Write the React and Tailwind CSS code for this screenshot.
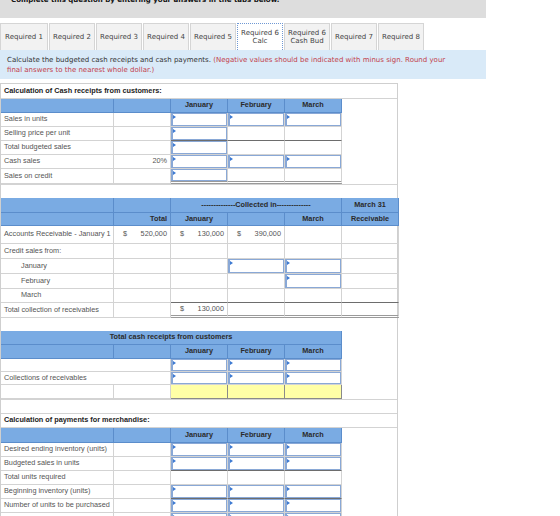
import React from 'react';

const GRID = 'grid grid-cols-[113px_57px_57px_57px_57px_57px]';

const edge = {
  dark: 'border-b-[#6d6d6d]',
  double: 'border-b-[3px] border-double border-b-[#9a9a9a]',
};

const Cell = ({ children, className = '', b }) => (
  <div className={`flex items-center border-r border-b border-[#d3d3d3] ${b ? edge[b] : ''} ${className}`}>
    {children}
  </div>
);

const Label = ({ children, indent, span }) => (
  <Cell className={`${span ? 'col-span-2' : ''} ${indent ? 'pl-[20px]' : 'pl-[3px]'} whitespace-nowrap text-[#555]`}>
    {children}
  </Cell>
);

const Empty = ({ b }) => <Cell b={b} />;

const Blank = () => <div />;

const Input = ({ b }) => (
  <div className={`relative border-r border-b border-[#d3d3d3] ${b ? edge[b] : ''}`}>
    <div className="absolute inset-0 border border-l-2 border-[#89a8d6] bg-white">
      <span className="absolute left-0 top-[1px] block h-0 w-0 border-y-[2px] border-l-[3px] border-y-transparent border-l-[#3d7ad2]" />
    </div>
  </div>
);

const Yellow = () => <div className="border-r border-b border-[#8a8a8a] bg-[#ffffa6]" />;

const Money = ({ v, b }) => (
  <Cell b={b} className="justify-between pl-[9px] pr-[3px] text-[#555]">
    <span>$</span>
    <span>{v}</span>
  </Cell>
);

const H = ({ children, className = '' }) => (
  <div className={`flex items-center justify-center whitespace-nowrap border-r border-b border-[#5b8dcb] bg-[#7aabe3] font-bold text-[#2a2a2a] ${className}`}>
    {children}
  </div>
);

const tabs = [
  { t: ['Required 1'], w: 'w-[48px]' },
  { t: ['Required 2'] },
  { t: ['Required 3'] },
  { t: ['Required 4'] },
  { t: ['Required 5'] },
  { t: ['Required 6', 'Calc'], active: true },
  { t: ['Required 6', 'Cash Bud'] },
  { t: ['Required 7'] },
  { t: ['Required 8'] },
];

const monthHeader = (
  <div className={`${GRID} h-[14px]`}>
    <H />
    <H />
    <H>January</H>
    <H>February</H>
    <H>March</H>
    <Blank />
  </div>
);

export default function App() {
  return (
    <div className="h-[516px] w-[560px] overflow-hidden bg-white">
      <div className="h-[18px] w-[486px] overflow-hidden bg-[#dddddd] pl-[11px] font-['DejaVu_Sans',sans-serif] text-[7px] font-bold leading-[8px] text-[#111]">
        <div className="-mt-[4px] whitespace-nowrap">Complete this question by entering your answers in the tabs below.</div>
      </div>

      <div className="mt-[5px] flex gap-px font-['DejaVu_Sans',sans-serif] text-[7px] leading-[8px] text-[#444]">
        {tabs.map((tab, i) => (
          <div
            key={i}
            className={`flex h-[27px] flex-col items-center justify-center border border-b-0 text-center ${tab.w || 'w-[46px]'} ${
              tab.active ? 'border-dotted border-[#6f98d4] bg-white' : 'border-[#d5d5d5] bg-[#f2f2f2]'
            }`}
          >
            {tab.t.map((line) => (
              <span key={line}>{line}</span>
            ))}
          </div>
        ))}
      </div>

      <div className="h-[29px] w-[486px] whitespace-nowrap bg-[#d9eaf8] px-[7px] pt-[5px] font-['DejaVu_Sans',sans-serif] text-[7px] leading-[10px] text-[#333]">
        Calculate the budgeted cash receipts and cash payments.{' '}
        <span className="text-[#c2414b]">
          (Negative values should be indicated with minus sign. Round your
          <br />
          final answers to the nearest whole dollar.)
        </span>
      </div>

      <div className="mt-[4px] w-[398px] border-t border-l border-r border-[#cfcfcf] font-['Liberation_Sans',Arial,sans-serif] text-[7.3px] text-[#333]">
        {/* cash receipts */}
        <div className="flex h-[15px] items-center border-b border-[#d3d3d3] pl-[3px] font-bold text-[#222]">
          Calculation of Cash receipts from customers:
        </div>
        {monthHeader}
        <div className={`${GRID} h-[14px]`}>
          <Label>Sales in units</Label>
          <Empty />
          <Input />
          <Input />
          <Input />
          <Blank />
        </div>
        <div className={`${GRID} h-[14px]`}>
          <Label>Selling price per unit</Label>
          <Empty />
          <Input b="dark" />
          <Empty b="dark" />
          <Empty b="dark" />
          <Blank />
        </div>
        <div className={`${GRID} h-[14px]`}>
          <Label>Total budgeted sales</Label>
          <Empty />
          <Input />
          <Empty />
          <Empty />
          <Blank />
        </div>
        <div className={`${GRID} h-[14px]`}>
          <Label>Cash sales</Label>
          <Cell className="justify-end pr-[3px] text-[#555]">20%</Cell>
          <Input />
          <Input />
          <Input />
          <Blank />
        </div>
        <div className={`${GRID} h-[15px]`}>
          <Label>Sales on credit</Label>
          <Empty />
          <Input b="double" />
          <Empty b="double" />
          <Empty b="double" />
          <Blank />
        </div>
        <div className="h-[14px] border-t border-[#d3d3d3]" />

        {/* collections */}
        <div className={`${GRID} h-[15px]`}>
          <H />
          <H />
          <H className="col-span-3">
            --------------Collected in--------------
          </H>
          <H>March 31</H>
        </div>
        <div className={`${GRID} h-[13px]`}>
          <H />
          <H className="justify-end pr-[3px]">Total</H>
          <H>January</H>
          <H />
          <H>March</H>
          <H>Receivable</H>
        </div>
        <div className={`${GRID} h-[18px]`}>
          <Label>Accounts Receivable - January 1</Label>
          <Money v="520,000" />
          <Money v="130,000" />
          <Money v="390,000" />
          <Empty />
          <Empty />
        </div>
        <div className={`${GRID} h-[15px]`}>
          <Label>Credit sales from:</Label>
          <Empty />
          <Empty />
          <Empty />
          <Empty />
          <Empty />
        </div>
        <div className={`${GRID} h-[15px]`}>
          <Label indent>January</Label>
          <Empty />
          <Empty />
          <Input />
          <Input />
          <Empty />
        </div>
        <div className={`${GRID} h-[15px]`}>
          <Label indent>February</Label>
          <Empty />
          <Empty />
          <Empty />
          <Input />
          <Empty />
        </div>
        <div className={`${GRID} h-[14px]`}>
          <Label indent>March</Label>
          <Empty />
          <Empty b="dark" />
          <Empty b="dark" />
          <Empty b="dark" />
          <Empty b="dark" />
        </div>
        <div className={`${GRID} h-[15px]`}>
          <Label>Total collection of receivables</Label>
          <Empty />
          <Money v="130,000" b="double" />
          <Empty b="double" />
          <Empty b="double" />
          <Empty b="double" />
        </div>
        <div className="h-[13px]" />

        {/* total cash receipts */}
        <div className={`${GRID} h-[14px]`}>
          <H className="col-span-5">Total cash receipts from customers</H>
          <Blank />
        </div>
        {monthHeader}
        <div className={`${GRID} h-[13px]`}>
          <Label span />
          <Input />
          <Input />
          <Input />
          <Blank />
        </div>
        <div className={`${GRID} h-[13px]`}>
          <Label span>Collections of receivables</Label>
          <Input />
          <Input />
          <Input />
          <Blank />
        </div>
        <div className={`${GRID} h-[14px]`}>
          <Empty />
          <Empty />
          <Yellow />
          <Yellow />
          <Yellow />
          <Blank />
        </div>
        <div className="h-[15px] border-t border-b border-[#d3d3d3]" />

        {/* payments for merchandise */}
        <div className="flex h-[14px] items-center border-b border-[#d3d3d3] pl-[3px] font-bold text-[#222]">
          Calculation of payments for merchandise:
        </div>
        <div className={`${GRID} h-[15px]`}>
          <H />
          <H />
          <H>January</H>
          <H>February</H>
          <H>March</H>
          <Blank />
        </div>
        <div className={`${GRID} h-[14px]`}>
          <Label>Desired ending inventory (units)</Label>
          <Empty />
          <Input />
          <Input />
          <Input />
          <Blank />
        </div>
        <div className={`${GRID} h-[14px]`}>
          <Label>Budgeted sales in units</Label>
          <Empty />
          <Input b="dark" />
          <Input b="dark" />
          <Input b="dark" />
          <Blank />
        </div>
        <div className={`${GRID} h-[14px]`}>
          <Label>Total units required</Label>
          <Empty />
          <Empty />
          <Empty />
          <Empty />
          <Blank />
        </div>
        <div className={`${GRID} h-[14px]`}>
          <Label>Beginning inventory (units)</Label>
          <Empty />
          <Input b="dark" />
          <Input b="dark" />
          <Input b="dark" />
          <Blank />
        </div>
        <div className={`${GRID} h-[14px]`}>
          <Label>Number of units to be purchased</Label>
          <Empty />
          <Input />
          <Input />
          <Input />
          <Blank />
        </div>
        <div className={`${GRID} h-[14px]`}>
          <Label>Cost per unit</Label>
          <Empty />
          <Input />
          <Input />
          <Input />
          <Blank />
        </div>
      </div>
    </div>
  );
}
